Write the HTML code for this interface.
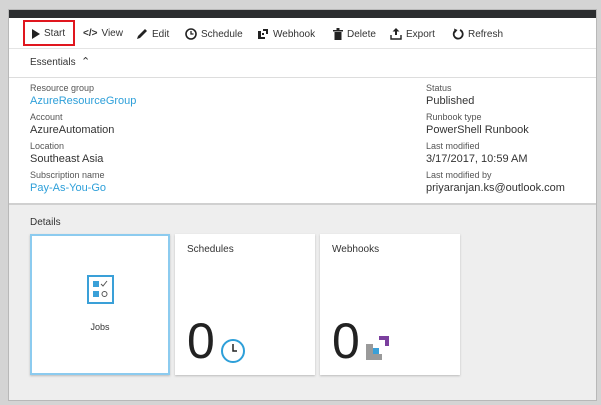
<!DOCTYPE html><html><head><style>
body{margin:0;width:601px;height:405px;background:#d4d4d4;font-family:"Liberation Sans",sans-serif;position:relative;overflow:hidden}
.frame{position:absolute;left:8px;top:9px;width:589px;height:392px;background:#eeeeee;border:1px solid #b8b8b8;box-sizing:border-box}
.dark{position:absolute;left:0;top:0;right:0;height:8px;background:#2b2d2f}
.tb{position:absolute;left:0;top:8px;right:0;height:30px;background:#fff;border-bottom:1px solid #e4e4e4}
.ti{position:absolute;top:10px;font-size:10px;color:#333;display:flex;align-items:center;gap:4px}
.ess{position:absolute;left:0;top:39px;right:0;height:28px;background:#fff;border-bottom:1px solid #ddd;font-size:10px;color:#333}
.info{position:absolute;left:0;top:68px;right:0;height:125px;background:#fff;border-bottom:2px solid #d0d0d0}
.t{position:absolute;font-size:9px;color:#555}
.v{position:absolute;font-size:11px;color:#333}
.l{color:#2d9fd9}
.card{position:absolute;top:224px;height:141px;width:140px;background:#fff;box-shadow:0 1px 2px #bbb}
.big{position:absolute;font-size:50px;color:#222;left:12px;top:82px;line-height:1}
</style></head><body>
<div class="frame">
<div class="dark"></div>
<div class="tb">
 <div style="position:absolute;left:14px;top:2px;width:52px;height:26px;border:2px solid #e0161e;box-sizing:border-box"></div>
 <div class="ti" style="left:22px"><svg width="9" height="10"><path d="M1 0L9 5L1 10Z" fill="#222"/></svg>Start</div>
 <div class="ti" style="left:74px"><b style="font-size:10px">&lt;/&gt;</b>View</div>
 <div class="ti" style="left:127px"><svg width="12" height="12"><path d="M1 11L2 8L9 1L11 3L4 10Z" fill="#222"/></svg>Edit</div>
 <div class="ti" style="left:176px"><svg width="12" height="12"><circle cx="6" cy="6" r="5" fill="none" stroke="#222" stroke-width="1.6"/><path d="M6 3V6H8.5" stroke="#222" stroke-width="1.3" fill="none"/></svg>Schedule</div>
 <div class="ti" style="left:248px"><svg width="12" height="12"><path d="M1 3H4V9H8V11H1Z M6 1H11V6H9V3H6Z" fill="#222"/><rect x="5" y="5" width="2" height="2" fill="#222"/></svg>Webhook</div>
 <div class="ti" style="left:324px"><svg width="10" height="12"><rect x="0" y="2" width="10" height="1.5" fill="#222"/><rect x="3.5" y="0" width="3" height="2" fill="#222"/><path d="M1.5 4H8.5V12H1.5Z" fill="#222"/></svg>Delete</div>
 <div class="ti" style="left:381px"><svg width="12" height="12"><path d="M6 0L2.5 3.5H5V7H7V3.5H9.5Z" fill="#222"/><path d="M1 7V11H11V7" fill="none" stroke="#222" stroke-width="1.4"/></svg>Export</div>
 <div class="ti" style="left:443px"><svg width="12" height="12"><path d="M4 2.2A4.5 4.5 0 1 0 8 2" fill="none" stroke="#222" stroke-width="1.8"/><path d="M2 0.5L5.5 2L3 5Z" fill="#222"/></svg>Refresh</div>
</div>
<div class="ess"><span style="position:absolute;left:21px;top:8px">Essentials</span><span style="position:absolute;left:72px;top:6px;font-size:11px">&#x2303;</span></div>
<div class="info">
 <div class="t" style="left:21px;top:5px">Resource group</div><div class="v l" style="left:21px;top:17px">AzureResourceGroup</div>
 <div class="t" style="left:21px;top:34px">Account</div><div class="v" style="left:21px;top:46px">AzureAutomation</div>
 <div class="t" style="left:21px;top:63px">Location</div><div class="v" style="left:21px;top:75px">Southeast Asia</div>
 <div class="t" style="left:21px;top:92px">Subscription name</div><div class="v l" style="left:21px;top:104px">Pay-As-You-Go</div>
 <div class="t" style="left:417px;top:5px">Status</div><div class="v" style="left:417px;top:17px">Published</div>
 <div class="t" style="left:417px;top:34px">Runbook type</div><div class="v" style="left:417px;top:46px">PowerShell Runbook</div>
 <div class="t" style="left:417px;top:63px">Last modified</div><div class="v" style="left:417px;top:75px">3/17/2017, 10:59 AM</div>
 <div class="t" style="left:417px;top:92px">Last modified by</div><div class="v" style="left:417px;top:104px">priyaranjan.ks@outlook.com</div>
</div>
<div style="position:absolute;left:21px;top:207px;font-size:10px;color:#333">Details</div>
<div class="card" style="left:21px;border:2px solid #8ccbef;box-sizing:border-box">
 <svg style="position:absolute;left:55px;top:39px" width="27" height="29"><rect x="1" y="1" width="25" height="27" fill="none" stroke="#3aa0d8" stroke-width="2"/><rect x="6" y="6" width="6" height="6" fill="#3aa0d8"/><rect x="6" y="16" width="6" height="6" fill="#3aa0d8"/><path d="M14 9L16 11L20 6" stroke="#555" fill="none"/><circle cx="17.5" cy="19" r="2.5" fill="none" stroke="#555"/></svg>
 <div style="position:absolute;left:0;right:0;top:86px;text-align:center;font-size:9px;color:#333">Jobs</div>
</div>
<div class="card" style="left:166px">
 <div style="position:absolute;left:12px;top:10px;font-size:10px;color:#333">Schedules</div>
 <div class="big">0</div>
 <svg style="position:absolute;left:45px;top:104px" width="26" height="26"><circle cx="13" cy="13" r="11" fill="#fff" stroke="#2d9fd9" stroke-width="2"/><path d="M13 6V13H17" stroke="#222" stroke-width="1.5" fill="none"/></svg>
</div>
<div class="card" style="left:311px">
 <div style="position:absolute;left:12px;top:10px;font-size:10px;color:#333">Webhooks</div>
 <div class="big">0</div>
 <svg style="position:absolute;left:45px;top:101px" width="26" height="26"><rect x="14" y="1" width="10" height="10" fill="#7b3f9e"/><rect x="14" y="5" width="6" height="6" fill="#fff"/><path d="M1 9H8V19H17V25H1Z" fill="#9a9a9a"/><rect x="8" y="13" width="6" height="6" fill="#3aa0d8"/></svg>
</div>
</div>
</body></html>
